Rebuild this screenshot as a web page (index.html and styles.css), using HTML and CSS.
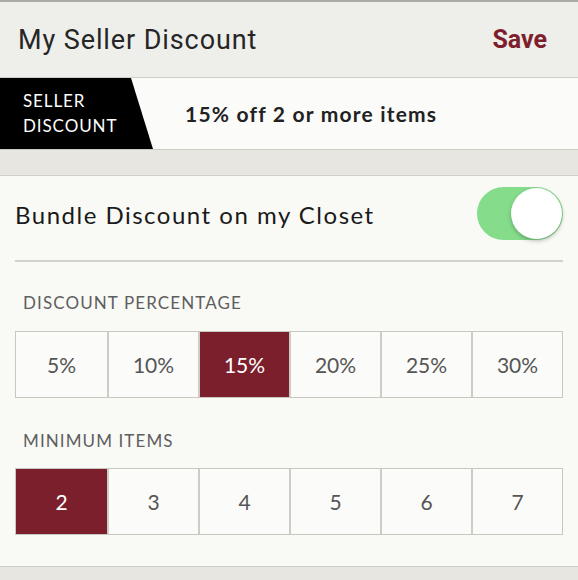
FILE: index.html
```
<!DOCTYPE html>
<html lang="en">
<head>
    <meta charset="UTF-8">
    <title>My Seller Discount</title>
    <link rel="stylesheet" href="styles.css">
</head>
<body>

<div class="topbar">
    <div class="topbar__title">My Seller Discount</div>
    <div class="topbar__save">Save</div>
</div>

<div class="banner">
    <div class="banner__tag">SELLER<br>DISCOUNT</div>
    <div class="banner__text">15% off 2 or more items</div>
</div>

<div class="band"></div>

<div class="settings">
    <div class="settings__row">
        <div class="settings__label">Bundle Discount on my Closet</div>
        <div class="toggle is-on"><span class="toggle__knob"></span></div>
    </div>

    <div class="settings__caption">DISCOUNT PERCENTAGE</div>
    <div class="options">
        <button>5%</button>
        <button>10%</button>
        <button class="is-selected">15%</button>
        <button>20%</button>
        <button>25%</button>
        <button>30%</button>
    </div>

    <div class="settings__caption settings__caption--second">MINIMUM ITEMS</div>
    <div class="options">
        <button class="is-selected">2</button>
        <button>3</button>
        <button>4</button>
        <button>5</button>
        <button>6</button>
        <button>7</button>
    </div>
</div>

<div class="band band--bottom"></div>

</body>
</html>
```
FILE: styles.css
```
*{
    box-sizing: border-box;
    margin:0;
    padding:0;
}
body{
    background:#f9f9f6;
    font-family: Lato, "Open Sans", sans-serif;
    color:#1c1c1c;
}
.topbar{
    height:78px;
    background:#eeeeea;
    border-top:2px solid #a9a9a5;
    border-bottom:1px solid #cfcfc9;
    display:flex;
    align-items:center;
    justify-content:space-between;
    padding:0 31px 0 18px;
}
.topbar__title{
    font-family: Roboto, sans-serif;
    font-size:27px;
    letter-spacing:0.9px;
    color:#262626;
}
.topbar__save{
    font-family: Roboto, sans-serif;
    font-weight:bold;
    font-size:25px;
    color:#7d1f2c;
}
.banner{
    height:72px;
    background:#fbfbf9;
    border-bottom:1px solid #cbcbc5;
    display:flex;
    align-items:center;
}
.banner__tag{
    width:153px;
    height:100%;
    background:#000;
    color:#fff;
    font-size:17px;
    letter-spacing:0.9px;
    line-height:25px;
    padding:10px 0 0 23px;
    clip-path: polygon(0 0, 131px 0, 100% 100%, 0 100%);
}
.banner__text{
    margin-left:32px;
    font-size:21px;
    letter-spacing:1.2px;
    font-weight:bold;
    color:#222;
}
.band{
    height:26px;
    background:#e7e6e0;
    border-bottom:1px solid #d0d0c9;
}
.band--bottom{
    height:15px;
    border-bottom:none;
    border-top:1px solid #d0d0c9;
}
.settings{
    padding:0 15px 31px 15px;
    background:#f9f9f6;
}
.settings__row{
    height:86px;
    display:flex;
    align-items:center;
    justify-content:space-between;
    border-bottom:2px solid #d2d2ca;
}
.settings__label{
    font-size:24px;
    letter-spacing:1.5px;
    color:#1a1a1a;
    margin-top:-8px;
}
.toggle{
    width:86px;
    height:53px;
    border-radius:27px;
    background:#85dc8b;
    position:relative;
    margin-top:-10px;
}
.toggle__knob{
    position:absolute;
    right:1px;
    top:1px;
    width:51px;
    height:51px;
    border-radius:50%;
    background:#fff;
    box-shadow:0 2px 4px rgba(0,0,0,0.25);
}
.settings__caption{
    font-size:17px;
    line-height:20px;
    letter-spacing:1.1px;
    color:#5e5e5e;
    margin:31px 0 18px 8px;
}
.settings__caption--second{
    margin:33px 0 17px 8px;
}
.options{
    display:grid;
    grid-template-columns:repeat(6, 1fr);
    border:1px solid #c8c8c0;
    background:#fbfbf9;
}
.options button{
    height:65px;
    border:none;
    border-left:2px solid #cdcdc5;
    background:transparent;
    font-family: Lato, "Open Sans", sans-serif;
    font-size:21px;
    color:#555;
}
.options button:first-child{
    border-left:none;
}
.options .is-selected{
    background:#7b1f2c;
    color:#fff;
}
```
